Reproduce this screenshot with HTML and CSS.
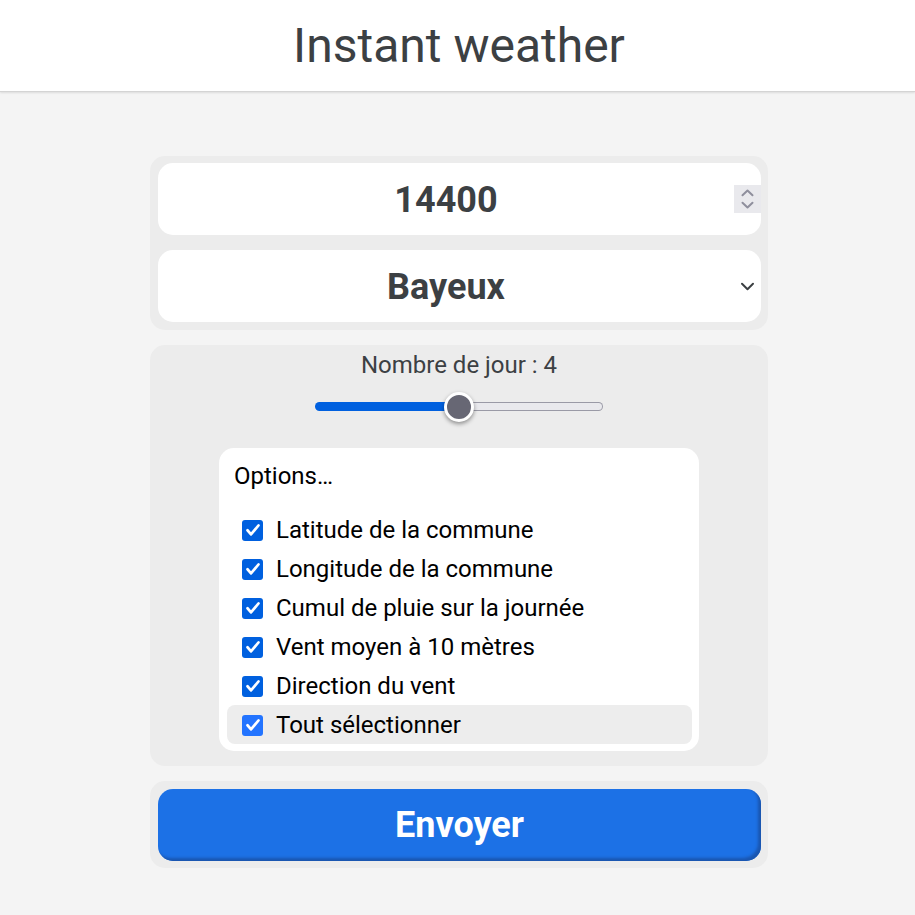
FILE: index.html
```html
<!DOCTYPE html>
<html lang="fr">
<head>
  <meta charset="utf-8">
  <meta name="viewport" content="width=device-width, initial-scale=1">
  <title>Instant weather</title>
  <link rel="stylesheet" href="styles.css">
</head>
<body>
  <header class="header">
    <h1 class="title">Instant weather</h1>
  </header>
  <main class="main">
    <form class="form">
      <div class="panel panel-fields">
        <div class="field">
          <input class="control" type="number" value="14400" aria-label="Code postal">
          <svg class="spinner" viewBox="0 0 27 28" aria-hidden="true">
            <path d="M8.5 10.3 13.5 5.5l5 4.8M8.5 17.7l5 4.8 5-4.8"/>
          </svg>
        </div>
        <div class="field">
          <select class="control" aria-label="Commune">
            <option selected>Bayeux</option>
          </select>
          <svg class="chevron" viewBox="0 0 27 28" aria-hidden="true">
            <path d="M8 11.8l5.5 5.4 5.5-5.4"/>
          </svg>
        </div>
      </div>

      <div class="panel panel-settings">
        <label class="days" for="days">Nombre de jour : 4</label>
        <input class="range" id="days" type="range" min="1" max="7" value="4">
        <details class="options" open>
          <summary class="summary">Options…</summary>
          <label class="option"><input class="check" type="checkbox" checked>Latitude de la commune</label>
          <label class="option"><input class="check" type="checkbox" checked>Longitude de la commune</label>
          <label class="option"><input class="check" type="checkbox" checked>Cumul de pluie sur la journée</label>
          <label class="option"><input class="check" type="checkbox" checked>Vent moyen à 10 mètres</label>
          <label class="option"><input class="check" type="checkbox" checked>Direction du vent</label>
          <label class="option option-active"><input class="check" type="checkbox" checked>Tout sélectionner</label>
        </details>
      </div>

      <div class="panel">
        <button class="submit" type="submit">Envoyer</button>
      </div>
    </form>
  </main>
</body>
</html>
```
FILE: styles.css
```css
* {
  box-sizing: border-box;
}

body {
  margin: 0;
  background: #f4f4f4;
  color: #3c4043;
  font-family: Roboto, sans-serif;
  font-size: 24px;
  line-height: 28px;
}

.header {
  padding: 18px 0 17px 3px;
  background: #fff;
  border-bottom: 1px solid #d4d4d4;
  box-shadow: 0 1px 2px rgba(0, 0, 0, 0.1);
}

.title {
  margin: 0;
  font-size: 48px;
  font-weight: 400;
  line-height: 56px;
  text-align: center;
}

.main {
  padding: 64px 0 48px 3px;
}

.form {
  display: flex;
  flex-direction: column;
  gap: 15px;
  max-width: 618px;
  margin: 0 auto;
}

.panel {
  padding: 7px 7px 7px 8px;
  background: #ececec;
  border-radius: 15px;
}

.panel-fields {
  display: flex;
  flex-direction: column;
  gap: 15px;
  padding-bottom: 8px;
}

.field {
  position: relative;
  display: flex;
  align-items: center;
  height: 72px;
  overflow: hidden;
  background: #fff;
  border-radius: 15px;
}

.control {
  flex: 1;
  min-width: 0;
  height: 100%;
  margin: 0;
  padding: 2px 0 0;
  appearance: none;
  border: 0;
  outline: 0;
  background: transparent;
  color: inherit;
  font: bold 36px Roboto, sans-serif;
  text-align: center;
  text-align-last: center;
}

input.control {
  appearance: textfield;
}

.control::-webkit-inner-spin-button {
  display: none;
}

.spinner,
.chevron {
  width: 27px;
  height: 28px;
  fill: none;
  stroke-width: 2;
  stroke-linecap: round;
  stroke-linejoin: round;
}

.spinner {
  background: #e9e9ed;
  stroke: #8f8f9d;
}

.chevron {
  stroke: #3c4043;
  pointer-events: none;
}

.panel-settings {
  display: flex;
  flex-direction: column;
  align-items: center;
  padding: 6px 15px 15px;
}

.range {
  width: 288px;
  height: 30px;
  margin: 12px 0 27px;
  appearance: none;
  background: transparent;
}

.range::-webkit-slider-runnable-track {
  height: 9px;
  border: 1px solid transparent;
  border-radius: 5px;
  background:
    linear-gradient(90deg, #0060df 50%, transparent 50%) border-box,
    linear-gradient(#e9e9ed, #e9e9ed) padding-box,
    linear-gradient(#9a9aa6, #9a9aa6) border-box;
}

.range::-webkit-slider-thumb {
  width: 30px;
  height: 30px;
  margin-top: -11px;
  appearance: none;
  border: 3px solid #fff;
  border-radius: 50%;
  background: #676774;
  box-shadow: 0 2px 4px rgba(0, 0, 0, 0.4);
}

.options {
  width: 100%;
  max-width: 480px;
  padding: 7px 7px 7px 8px;
  border-radius: 15px;
  background: #fff;
  color: #000;
}

.summary {
  padding: 7px 7px 20px;
  list-style: none;
}

.option {
  display: flex;
  align-items: center;
  gap: 13px;
  height: 39px;
  padding: 0 15px;
  border-radius: 8px;
}

.option-active {
  background: #ededed;
}

.check {
  width: 21px;
  height: 21px;
  margin: 1px 0 0;
  appearance: none;
  border-radius: 3px;
  background: #0060df;
}

.option-active .check {
  background: #2374ff;
}

.check:checked::before {
  content: "";
  display: block;
  width: 21px;
  height: 21px;
  background: #fff;
  clip-path: path("M4.6 9.7 Q5.5 8.9 6.5 9.8 L9 12.7 L15.6 5 Q16.6 4.1 17.5 4.9 Q18.3 5.7 17.5 6.8 L10 15.8 Q9 16.9 8 15.8 L4.3 11.4 Q3.8 10.5 4.6 9.7 Z");
}

.submit {
  display: block;
  width: 100%;
  height: 72px;
  margin-top: 1px;
  padding: 0;
  border: 0;
  border-radius: 15px;
  background: #1c71e6;
  box-shadow: inset -3px -3px 3px #1a56b0;
  color: #fff;
  font: bold 36px Roboto, sans-serif;
}
```
